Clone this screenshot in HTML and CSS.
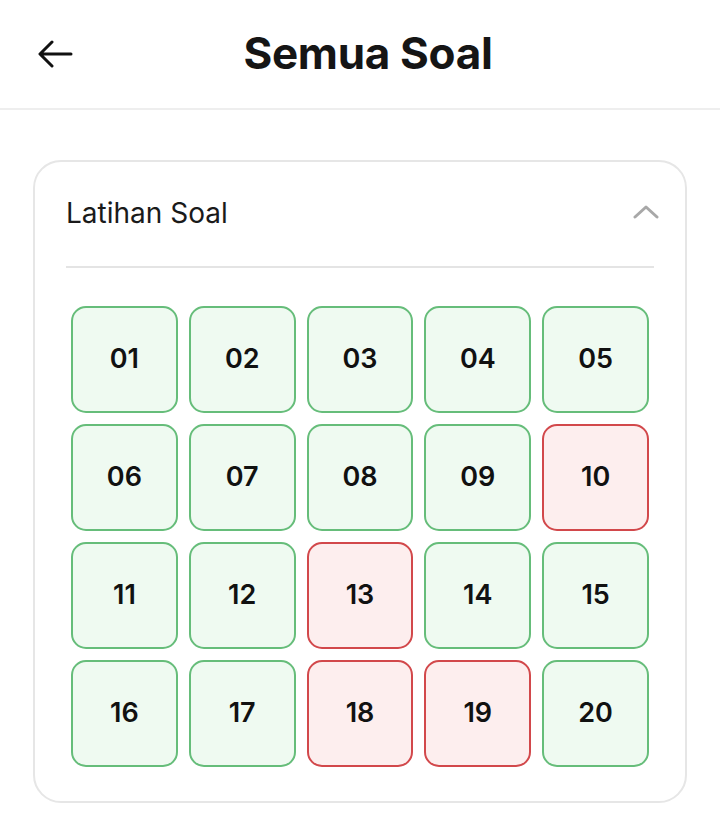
FILE: index.html
```html
<!DOCTYPE html>
<html lang="id">
<head>
<meta charset="utf-8">
<title>Semua Soal</title>
<link rel="stylesheet" href="styles.css">
</head>
<body>
<header class="topbar">
  <button class="back" aria-label="Kembali">
    <svg width="36" height="30" viewBox="0 0 36 30" fill="none" stroke="#111" stroke-width="3" stroke-linecap="round" stroke-linejoin="round">
      <path d="M33 14H3M14 2L2 14L14 26"/>
    </svg>
  </button>
  <h1 class="title">Semua Soal</h1>
</header>
<main class="content">
  <section class="card">
    <div class="card-head">
      <span class="card-title">Latihan Soal</span>
      <svg class="chev" width="26" height="16" viewBox="0 0 26 16" fill="none" stroke="#a8a8a8" stroke-width="3" stroke-linecap="round" stroke-linejoin="round">
        <path d="M2 13L13 3L24 13"/>
      </svg>
    </div>
    <div class="grid">
      <div class="cell ok">01</div>
      <div class="cell ok">02</div>
      <div class="cell ok">03</div>
      <div class="cell ok">04</div>
      <div class="cell ok">05</div>
      <div class="cell ok">06</div>
      <div class="cell ok">07</div>
      <div class="cell ok">08</div>
      <div class="cell ok">09</div>
      <div class="cell bad">10</div>
      <div class="cell ok">11</div>
      <div class="cell ok">12</div>
      <div class="cell bad">13</div>
      <div class="cell ok">14</div>
      <div class="cell ok">15</div>
      <div class="cell ok">16</div>
      <div class="cell ok">17</div>
      <div class="cell bad">18</div>
      <div class="cell bad">19</div>
      <div class="cell ok">20</div>
    </div>
  </section>
</main>
</body>
</html>
```

FILE: styles.css
```css
* { box-sizing: border-box; }
html, body { margin: 0; padding: 0; background: #fff; }
body {
  font-family: Inter, "Noto Sans", "Liberation Sans", sans-serif;
  color: #111;
  width: 720px;
  height: 835px;
  overflow: hidden;
}
.topbar {
  height: 110px;
  border-bottom: 2px solid #eeeeee;
  display: flex;
  align-items: center;
  justify-content: center;
  padding-left: 16px;
  position: relative;
}
.back {
  position: absolute;
  left: 38px;
  top: 40px;
  border: 0;
  background: none;
  padding: 0;
  display: flex;
}
.title {
  margin: 0;
  font-size: 44px;
  font-weight: 700;
  letter-spacing: -0.3px;
  color: #151515;
  margin-top: -2px;
}
.content {
  padding: 50px 33px 0;
}
.card {
  border: 2px solid #e6e6e6;
  border-radius: 28px;
  padding: 0 31px 34px;
}
.card-head {
  height: 106px;
  border-bottom: 2px solid #e4e4e4;
  display: flex;
  align-items: center;
  justify-content: space-between;
}
.card-title {
  font-size: 28px;
  font-weight: 400;
  color: #1a1a1a;
  margin-top: -3px;
}
.chev { margin-right: -5px; margin-top: -5px; }
.grid {
  margin-top: 38px;
  padding: 0 5px;
  display: grid;
  grid-template-columns: repeat(5, 1fr);
  gap: 11px;
}
.cell {
  height: 107px;
  border-radius: 15px;
  border: 2px solid #66bd7a;
  background: #effaf1;
  display: flex;
  align-items: center;
  justify-content: center;
  font-size: 27px;
  font-weight: 600;
  color: #111;
  padding-bottom: 3px;
}
.cell.bad {
  border-color: #d2484b;
  background: #fdeeee;
}
```
